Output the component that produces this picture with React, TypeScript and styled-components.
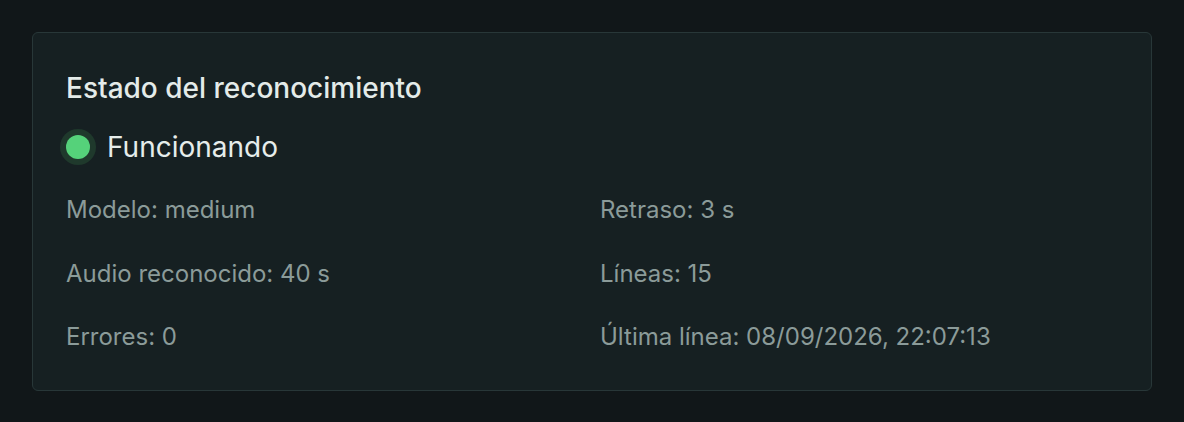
import styled, { createGlobalStyle } from "styled-components";

const GlobalStyle = createGlobalStyle`
	html, body {
		margin: 0;
		padding: 0;
		background: #111719;
		font-family: Inter, "Noto Sans", sans-serif;
	}
`;

const Page = styled.div`
	padding: 32px;
	height: 422px;
	box-sizing: border-box;
`;

const Card = styled.section`
	background: #162022;
	border: 1px solid #283738;
	border-radius: 6px;
	padding: 39px 33px 39px;
	box-sizing: border-box;
	height: 359px;
`;

const Title = styled.h2`
	margin: 0;
	font-size: 28px;
	line-height: 32px;
	font-weight: 500;
	color: #e4ebe9;
`;

const Status = styled.div`
	display: flex;
	align-items: center;
	gap: 17px;
	margin-top: 27px;
	height: 32px;
	font-size: 28px;
	color: #e6edeb;
`;

const Dot = styled.span<{ $color: string }>`
	width: 24px;
	height: 24px;
	border-radius: 50%;
	background: ${(p) => p.$color};
	box-shadow: 0 0 0 6px #1f392c;
	flex-shrink: 0;
`;

const Details = styled.div`
	display: grid;
	grid-template-columns: 1fr 1fr;
	column-gap: 16px;
	row-gap: 35.5px;
	margin-top: 33px;
`;

const Item = styled.div`
	font-size: 24px;
	line-height: 28px;
	color: #8b9b99;
`;

const items = [
	"Modelo: medium",
	"Retraso: 3 s",
	"Audio reconocido: 40 s",
	"Líneas: 15",
	"Errores: 0",
	"Última línea: 08/09/2026, 22:07:13",
];

export default function App() {
	return (
		<>
			<GlobalStyle />
			<Page>
				<Card>
					<Title>Estado del reconocimiento</Title>
					<Status>
						<Dot $color="#55d27a" />
						Funcionando
					</Status>
					<Details>
						{items.map((t) => (
							<Item key={t}>{t}</Item>
						))}
					</Details>
				</Card>
			</Page>
		</>
	);
}
